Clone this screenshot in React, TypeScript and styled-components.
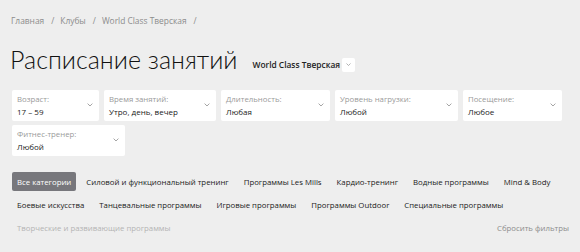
import styled, {createGlobalStyle} from 'styled-components';

const GlobalStyle = createGlobalStyle`
  body {
    margin: 0;
    background: #eeeeee;
    font-family: "Open Sans", "Liberation Sans", sans-serif;
    color: #1a1a1a;
  }
`;

type Filter = {label: string; value: string; width: number};

const filterRows: Filter[][] = [
  [
    {label: 'Возраст:', value: '17 – 59', width: 87},
    {label: 'Время занятий:', value: 'Утро, день, вечер', width: 112},
    {label: 'Длительность:', value: 'Любая', width: 109},
    {label: 'Уровень нагрузки:', value: 'Любой', width: 123},
    {label: 'Посещение:', value: 'Любое', width: 99},
  ],
  [{label: 'Фитнес-тренер:', value: 'Любой', width: 113}],
];

const categoryRows = [
  [
    'Все категории',
    'Силовой и функциональный тренинг',
    'Программы Les Mills',
    'Кардио-тренинг',
    'Водные программы',
    'Mind & Body',
  ],
  [
    'Боевые искусства',
    'Танцевальные программы',
    'Игровые программы',
    'Программы Outdoor',
    'Специальные программы',
  ],
];

function Chevron({size = 6}: {size?: number}) {
  return (
    <svg width={size} height={size * 0.6} viewBox="0 0 10 6">
      <path d="M1 1l4 4 4-4" fill="none" stroke="#8a8a8a" strokeWidth="1.3" />
    </svg>
  );
}

function App() {
  return (
    <Page>
      <GlobalStyle />
      <Breadcrumbs>
        <span>Главная</span>
        <Sep>/</Sep>
        <span>Клубы</span>
        <Sep>/</Sep>
        <span>World Class Тверская</span>
        <Sep>/</Sep>
      </Breadcrumbs>

      <TitleRow>
        <Title>Расписание занятий</Title>
        <ClubName>World Class Тверская</ClubName>
        <ClubToggle>
          <Chevron size={5} />
        </ClubToggle>
      </TitleRow>

      <Filters>
        {filterRows.map((row, i) => (
          <FilterRow key={i}>
            {row.map((f) => (
              <FilterCard key={f.label} $width={f.width}>
                <FilterText>
                  <FilterLabel>{f.label}</FilterLabel>
                  <FilterValue>{f.value}</FilterValue>
                </FilterText>
                <Chevron />
              </FilterCard>
            ))}
          </FilterRow>
        ))}
      </Filters>

      <Categories>
        {categoryRows.map((row, i) => (
          <CategoryRow key={i}>
            {row.map((c) => (
              <Category key={c} $active={c === 'Все категории'}>
                {c}
              </Category>
            ))}
          </CategoryRow>
        ))}
        <LastRow>
          <Category $muted>Творческие и развивающие программы</Category>
          <Reset>Сбросить фильтры</Reset>
        </LastRow>
      </Categories>
    </Page>
  );
}

export default App;

const Page = styled.div`
  width: 580px;
  height: 252px;
  padding: 13px 0 0 12px;
  box-sizing: border-box;
  overflow: hidden;
`;

const Breadcrumbs = styled.div`
  display: flex;
  align-items: center;
  font-size: 8.4px;
  color: #8c8c8c;
  height: 15px;
  margin-left: -1px;
`;

const Sep = styled.span`
  margin: 0 6px 0 7px;
`;

const TitleRow = styled.div`
  display: flex;
  align-items: center;
  margin-top: 16px;
  margin-left: -2px;
  height: 30px;
`;

const Title = styled.h1`
  margin: 0;
  font-family: Lato, "Open Sans", sans-serif;
  font-weight: 300;
  font-size: 25px;
  line-height: 30px;
  color: #111;
`;

const ClubName = styled.span`
  margin-left: 15px;
  margin-top: 11px;
  font-size: 8.4px;
  font-weight: 600;
  color: #222;
`;

const ClubToggle = styled.span`
  display: flex;
  align-items: center;
  justify-content: center;
  width: 13px;
  height: 14px;
  margin-left: 2px;
  margin-top: 11px;
  background: #fff;
  border-radius: 2px;
`;

const Filters = styled.div`
  display: flex;
  flex-direction: column;
  gap: 4px;
  margin-top: 16px;
`;

const FilterRow = styled.div`
  display: flex;
  gap: 5px;
`;

const FilterCard = styled.div<{$width: number}>`
  width: ${(p) => p.$width}px;
  height: 31px;
  box-sizing: border-box;
  background: #fff;
  border-radius: 2px;
  display: flex;
  align-items: center;
  justify-content: space-between;
  padding: 0 6px 1px 5px;
`;

const FilterText = styled.div`
  display: flex;
  flex-direction: column;
  gap: 2px;
`;

const FilterLabel = styled.span`
  font-size: 7.8px;
  color: #9a9a9a;
  line-height: 10px;
`;

const FilterValue = styled.span`
  font-size: 8px;
  font-weight: 500;
  color: #1a1a1a;
  line-height: 11px;
`;

const Categories = styled.div`
  display: flex;
  flex-direction: column;
  gap: 4px;
  margin-top: 16px;
`;

const CategoryRow = styled.div`
  display: flex;
  align-items: center;
  gap: 5px;
`;

const LastRow = styled.div`
  display: flex;
  align-items: center;
  justify-content: space-between;
  width: 557px;
`;

const Category = styled.span<{$active?: boolean; $muted?: boolean}>`
  height: 19px;
  display: flex;
  align-items: center;
  padding: 0 5px;
  border-radius: 2px;
  font-size: 7.8px;
  font-weight: 500;
  white-space: nowrap;
  background: ${(p) => (p.$active ? '#77777c' : 'transparent')};
  color: ${(p) => (p.$active ? '#fff' : p.$muted ? '#b4b4b4' : '#1a1a1a')};
`;

const Reset = styled.span`
  font-size: 7.8px;
  color: #8c8c8c;
`;
